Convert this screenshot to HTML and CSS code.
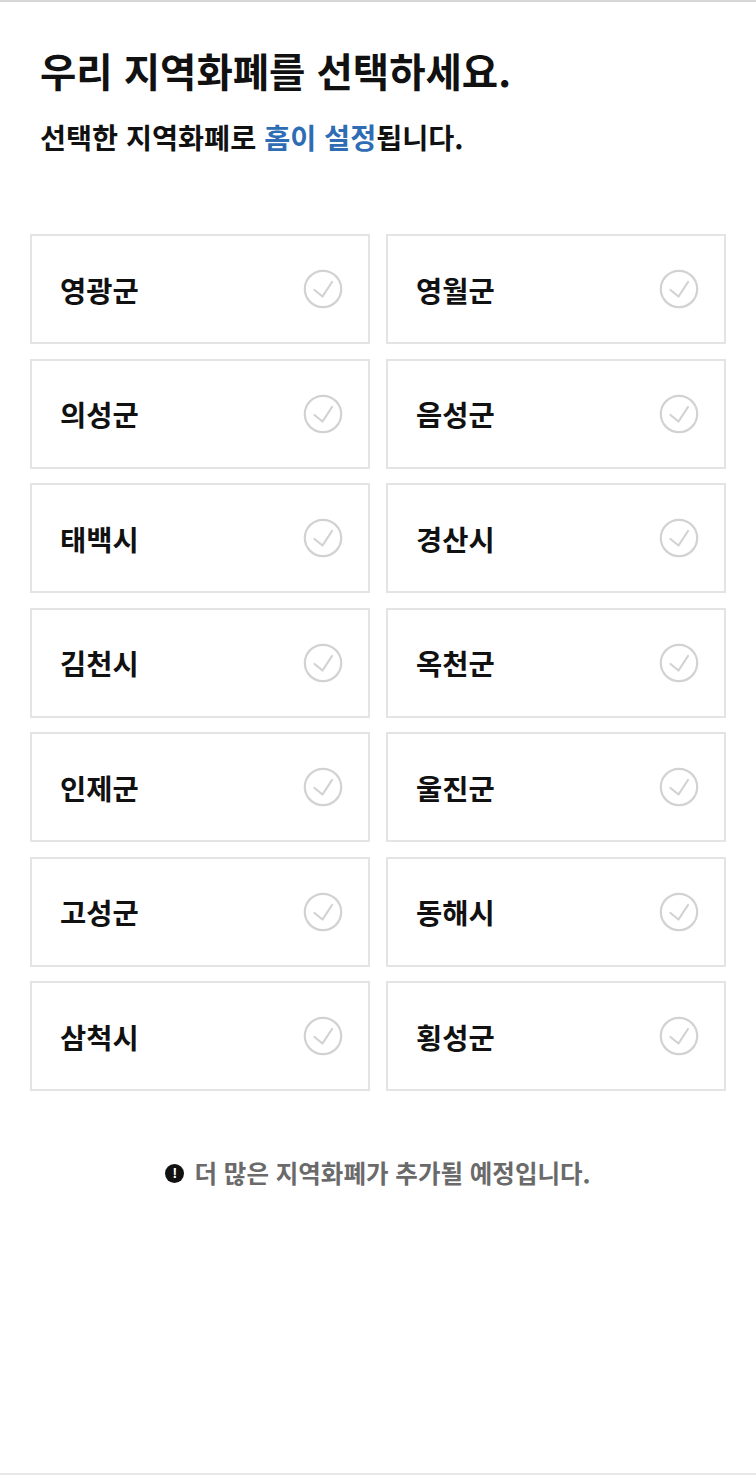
FILE: index.html
```html
<!DOCTYPE html>
<html lang="ko">
<head>
<meta charset="utf-8">
<title>지역화폐 선택</title>
<link rel="stylesheet" href="styles.css">
</head>
<body>
<div class="page">
  <header class="intro">
    <h1 class="title">우리 지역화폐를 선택하세요.</h1>
    <p class="subtitle">선택한 지역화폐로 <span class="accent">홈이 설정</span>됩니다.</p>
  </header>
  <ul class="grid">
    <li class="card"><span class="name">영광군</span><svg class="check" viewBox="0 0 40 40"><circle cx="20" cy="20" r="18.2"/><path d="M11.5 21 L19.5 27.5 L29 13"/></svg></li>
    <li class="card"><span class="name">영월군</span><svg class="check" viewBox="0 0 40 40"><circle cx="20" cy="20" r="18.2"/><path d="M11.5 21 L19.5 27.5 L29 13"/></svg></li>
    <li class="card"><span class="name">의성군</span><svg class="check" viewBox="0 0 40 40"><circle cx="20" cy="20" r="18.2"/><path d="M11.5 21 L19.5 27.5 L29 13"/></svg></li>
    <li class="card"><span class="name">음성군</span><svg class="check" viewBox="0 0 40 40"><circle cx="20" cy="20" r="18.2"/><path d="M11.5 21 L19.5 27.5 L29 13"/></svg></li>
    <li class="card"><span class="name">태백시</span><svg class="check" viewBox="0 0 40 40"><circle cx="20" cy="20" r="18.2"/><path d="M11.5 21 L19.5 27.5 L29 13"/></svg></li>
    <li class="card"><span class="name">경산시</span><svg class="check" viewBox="0 0 40 40"><circle cx="20" cy="20" r="18.2"/><path d="M11.5 21 L19.5 27.5 L29 13"/></svg></li>
    <li class="card"><span class="name">김천시</span><svg class="check" viewBox="0 0 40 40"><circle cx="20" cy="20" r="18.2"/><path d="M11.5 21 L19.5 27.5 L29 13"/></svg></li>
    <li class="card"><span class="name">옥천군</span><svg class="check" viewBox="0 0 40 40"><circle cx="20" cy="20" r="18.2"/><path d="M11.5 21 L19.5 27.5 L29 13"/></svg></li>
    <li class="card"><span class="name">인제군</span><svg class="check" viewBox="0 0 40 40"><circle cx="20" cy="20" r="18.2"/><path d="M11.5 21 L19.5 27.5 L29 13"/></svg></li>
    <li class="card"><span class="name">울진군</span><svg class="check" viewBox="0 0 40 40"><circle cx="20" cy="20" r="18.2"/><path d="M11.5 21 L19.5 27.5 L29 13"/></svg></li>
    <li class="card"><span class="name">고성군</span><svg class="check" viewBox="0 0 40 40"><circle cx="20" cy="20" r="18.2"/><path d="M11.5 21 L19.5 27.5 L29 13"/></svg></li>
    <li class="card"><span class="name">동해시</span><svg class="check" viewBox="0 0 40 40"><circle cx="20" cy="20" r="18.2"/><path d="M11.5 21 L19.5 27.5 L29 13"/></svg></li>
    <li class="card"><span class="name">삼척시</span><svg class="check" viewBox="0 0 40 40"><circle cx="20" cy="20" r="18.2"/><path d="M11.5 21 L19.5 27.5 L29 13"/></svg></li>
    <li class="card"><span class="name">횡성군</span><svg class="check" viewBox="0 0 40 40"><circle cx="20" cy="20" r="18.2"/><path d="M11.5 21 L19.5 27.5 L29 13"/></svg></li>
  </ul>
  <p class="notice"><span class="notice-icon">!</span>더 많은 지역화폐가 추가될 예정입니다.</p>
</div>
</body>
</html>
```

FILE: styles.css
```css
html, body {
  margin: 0;
  padding: 0;
  background: #ffffff;
}

body {
  font-family: "Noto Sans CJK KR", "Noto Sans", sans-serif;
  color: #111111;
}

.page {
  box-sizing: border-box;
  min-height: 100vh;
  border-top: 2px solid #d6d6d6;
  border-bottom: 2px solid #e8e8e8;
  padding: 0 30px;
}

.intro {
  padding: 38px 10px 0;
}

.title {
  margin: 0;
  font-size: 39.5px;
  line-height: 60px;
  font-weight: 700;
  letter-spacing: 0;
}

.subtitle {
  margin: 17px 0 0;
  font-size: 28.3px;
  line-height: 40px;
  font-weight: 700;
}

.accent {
  color: #2e6db4;
}

.grid {
  list-style: none;
  margin: 77px 0 0;
  padding: 0;
  display: grid;
  grid-template-columns: 1fr 1fr;
  column-gap: 16px;
  row-gap: 14.5px;
}

.card {
  box-sizing: border-box;
  height: 110px;
  border: 2px solid #e4e4e4;
  display: flex;
  align-items: center;
  justify-content: space-between;
  padding: 0 25px 0 28px;
}

.name {
  font-size: 28.5px;
  font-weight: 700;
  color: #111111;
}

.check {
  width: 40px;
  height: 40px;
  fill: none;
  stroke: #d2d2d2;
  stroke-width: 2.2;
  stroke-linecap: round;
  stroke-linejoin: round;
}

.notice {
  margin: 66px 0 0;
  display: flex;
  align-items: center;
  justify-content: center;
  gap: 10px;
  font-size: 24.5px;
  line-height: 32px;
  font-weight: 700;
  color: #6a6a6a;
}

.notice-icon {
  width: 19px;
  height: 19px;
  border-radius: 50%;
  background: #111111;
  color: #ffffff;
  font-size: 14px;
  line-height: 19px;
  font-weight: 900;
  text-align: center;
  font-family: "Liberation Sans", sans-serif;
}
```
